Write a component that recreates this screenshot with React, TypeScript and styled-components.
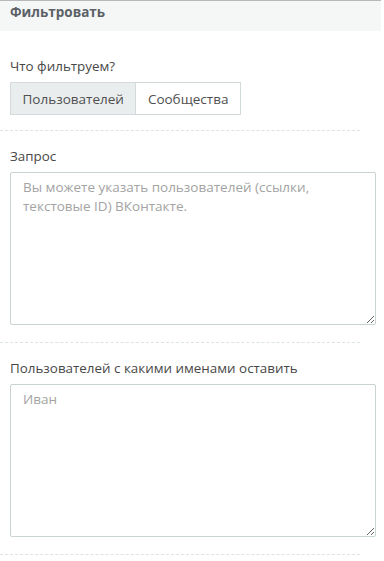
import { useState } from "react";
import styled, { createGlobalStyle } from "styled-components";

const GlobalStyle = createGlobalStyle`
  body {
    margin: 0;
    background: #ffffff;
    font-family: "Open Sans", "Noto Sans", sans-serif;
  }
`;

const Panel = styled.div`
  width: 381px;
`;

const Header = styled.div`
  height: 31px;
  border-top: 1px solid #b8b8b8;
  background: #f5f7f7;
  padding: 2px 10px 0;
  box-sizing: border-box;
  font-size: 13.5px;
  line-height: 18px;
  font-weight: 700;
  color: #5b6166;
`;

const Group = styled.div<{ $first?: boolean }>`
  width: 360px;
  padding: ${(p) => (p.$first ? "25px" : "15px")} 0 ${(p) => (p.$first ? "15px" : "17px")} 10px;
  box-sizing: border-box;
  border-bottom: 1px dashed #dbe3e3;
`;

const Label = styled.div`
  font-size: 13.4px;
  line-height: 20px;
  color: #484848;
  margin-bottom: 6px;
  white-space: nowrap;
`;

const Switch = styled.div`
  display: flex;
`;

const SwitchButton = styled.button<{ $active: boolean }>`
  height: 33px;
  padding: 0 11.5px;
  font-family: inherit;
  font-size: 13.5px;
  color: #505050;
  background: ${(p) => (p.$active ? "#e9edee" : "#ffffff")};
  border: 1px solid #d3dadb;
  margin-left: -1px;
  cursor: pointer;

  &:first-child {
    margin-left: 0;
  }
`;

const TextArea = styled.textarea`
  display: block;
  width: 366px;
  height: 153px;
  box-sizing: border-box;
  padding: 5px 12px;
  font-family: inherit;
  font-size: 13.5px;
  line-height: 19px;
  color: #444;
  border: 1px solid #c9d3d2;
  border-radius: 2px;
  outline: none;

  &::placeholder {
    color: #a3a3a3;
  }
`;

export default function App() {
  const [target, setTarget] = useState<"users" | "groups">("users");

  return (
    <Panel>
      <GlobalStyle />
      <Header>Фильтровать</Header>
      <Group $first>
        <Label>Что фильтруем?</Label>
        <Switch>
          <SwitchButton $active={target === "users"} onClick={() => setTarget("users")}>
            Пользователей
          </SwitchButton>
          <SwitchButton $active={target === "groups"} onClick={() => setTarget("groups")}>
            Сообщества
          </SwitchButton>
        </Switch>
      </Group>
      <Group>
        <Label>Запрос</Label>
        <TextArea placeholder="Вы можете указать пользователей (ссылки, текстовые ID) ВКонтакте." />
      </Group>
      <Group>
        <Label>Пользователей с какими именами оставить</Label>
        <TextArea placeholder="Иван" />
      </Group>
    </Panel>
  );
}
